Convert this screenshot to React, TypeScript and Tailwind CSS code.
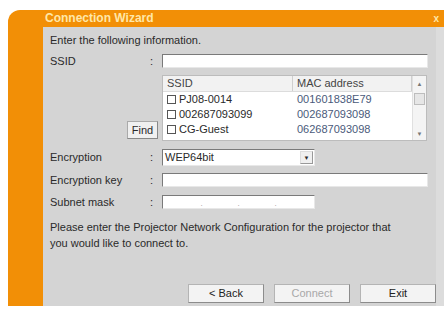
const font = { fontFamily: '"Liberation Sans", Arial, sans-serif' };

function Field({ w, children }: { w: string; children?: React.ReactNode }) {
  return (
    <div className={`${w} h-[14px] bg-white border-t border-l border-t-[#7a7a7a] border-l-[#7a7a7a] border-b border-r border-b-[#e8e8e8] border-r-[#e8e8e8] flex items-center`}>
      {children}
    </div>
  );
}

function Btn({ label, disabled }: { label: string; disabled?: boolean }) {
  return (
    <div className={`w-[76px] h-[19px] flex items-center justify-center bg-[#f3f3f3] border border-[#b4b4b4] border-b-[#8c8c8c] border-r-[#8c8c8c] ${disabled ? "text-[#a8a8a8]" : "text-[#222]"}`}>
      {label}
    </div>
  );
}

function Check() {
  return <span className="inline-block w-[9px] h-[9px] border border-[#555] bg-white mr-[3px]" />;
}

export default function App() {
  const rows = [
    ["PJ08-0014", "001601838E79"],
    ["002687093099", "002687093098"],
    ["CG-Guest", "062687093098"],
  ];

  return (
    <div className="w-[448px] h-[310px] bg-white pt-[10px] pl-[8px] text-[11px] leading-[13px]" style={font}>
      <div className="w-[436px] h-[296px] rounded-tl-[12px] bg-[#f28f06] flex flex-col overflow-hidden">
        <div className="h-[17px] flex items-center pl-[37px] pr-[5px]">
          <span className="text-[#ffe7a8] text-[12px] font-bold flex-1">Connection Wizard</span>
          <span className="text-[#ffe7a8] text-[10px] font-bold">x</span>
        </div>
        <div className="flex flex-1">
          <div className="w-[35px]" />
          <div className="flex-1 flex bg-[#d4d4d4] text-[#2a2a2a]">
            <div className="flex-1 flex flex-col pl-[7px] pt-[7px]">
              <div>Enter the following information.</div>

              <div className="flex items-center mt-[7px]">
                <div className="w-[100px]">SSID</div>
                <div className="w-[12px]">:</div>
                <Field w="w-[266px]" />
              </div>

              <div className="flex mt-[7px]">
                <div className="w-[112px] flex justify-end items-end pr-[4px]">
                  <div className="w-[31px] h-[18px] bg-[#f0f0f0] border border-[#aaa] border-b-[#888] border-r-[#888] flex items-center justify-center mb-[2px]">Find</div>
                </div>
                <div className="w-[265px] h-[66px] bg-white border border-[#bcbcbc] flex">
                  <div className="flex-1 flex flex-col">
                    <div className="flex h-[16px] items-center bg-[#f2f2f2] border-b border-[#dcdcdc] text-[#444]">
                      <div className="w-[130px] h-full flex items-center pl-[4px] border-r border-[#cfcfcf]">SSID</div>
                      <div className="flex-1 h-full flex items-center pl-[4px] border-r border-[#cfcfcf]">MAC address</div>
                    </div>
                    {rows.map(([s, m]) => (
                      <div key={s} className="flex h-[15px] items-center">
                        <div className="w-[130px] pl-[4px] flex items-center">
                          <Check />
                          {s}
                        </div>
                        <div className="flex-1 pl-[4px] text-[#4a5a7a]">{m}</div>
                      </div>
                    ))}
                  </div>
                  <div className="w-[14px] flex flex-col bg-[#f4f4f4] border-l border-[#e0e0e0]">
                    <div className="h-[16px] text-[6px] leading-[16px] text-center text-[#777]">▲</div>
                    <div className="h-[12px] mx-[1px] mt-[1px] bg-[#e6e6e6] border border-[#bdbdbd]" />
                    <div className="flex-1" />
                    <div className="h-[12px] text-[6px] leading-[12px] text-center text-[#777]">▼</div>
                  </div>
                </div>
              </div>

              <div className="flex items-center mt-[8px]">
                <div className="w-[100px]">Encryption</div>
                <div className="w-[12px]">:</div>
                <div className="w-[153px] h-[17px] bg-white border-t border-l border-[#7a7a7a] border-b border-r border-b-[#e8e8e8] border-r-[#e8e8e8] flex items-center">
                  <span className="flex-1 pl-[2px]">WEP64bit</span>
                  <div className="w-[13px] h-[13px] mr-[1px] bg-[#f0f0f0] border border-[#999] border-t-[#ddd] border-l-[#ddd] flex items-center justify-center text-[6px] leading-none">▼</div>
                </div>
              </div>

              <div className="flex items-center mt-[7px]">
                <div className="w-[100px]">Encryption key</div>
                <div className="w-[12px]">:</div>
                <Field w="w-[266px]" />
              </div>

              <div className="flex items-center mt-[8px]">
                <div className="w-[100px]">Subnet mask</div>
                <div className="w-[12px]">:</div>
                <Field w="w-[153px]">
                  <div className="flex w-full justify-around text-[#999] text-[8px] leading-none pt-[4px] px-[20px]">
                    <span>.</span>
                    <span>.</span>
                    <span>.</span>
                  </div>
                </Field>
              </div>

              <div className="mt-[10px] leading-[16px]">
                Please enter the Projector Network Configuration for the projector that
                <br />
                you would like to connect to.
              </div>

              <div className="flex justify-end gap-[10px] mt-[33px]">
                <Btn label="< Back" />
                <Btn label="Connect" disabled />
                <Btn label="Exit" />
              </div>
            </div>
            <div className="w-[8px] bg-[#dcdcdc]" />
          </div>
        </div>
      </div>
    </div>
  );
}
